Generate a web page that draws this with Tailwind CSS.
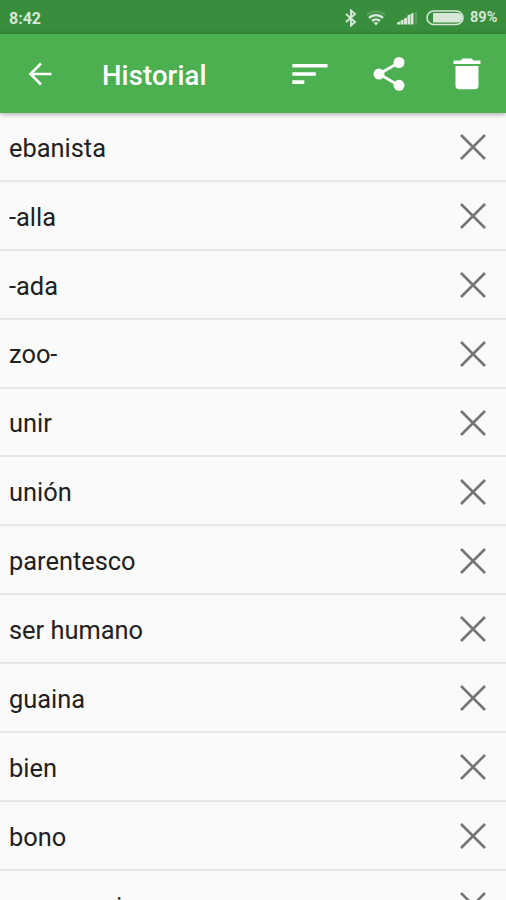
<!DOCTYPE html>
<html lang="es">
<head>
<meta charset="utf-8">
<title>Historial</title>
<script src="https://cdn.jsdelivr.net/npm/@tailwindcss/browser@4"></script>
</head>
<body class="h-[900px] overflow-hidden bg-[#fafafa] font-[Roboto,sans-serif] flex flex-col">
<div class="h-[34px] shrink-0 bg-[#388e3c] flex items-center justify-between pl-[9px] pr-[8px] text-[#d7e8d8]">
  <span class="text-[16px] font-bold leading-none pt-[3px]">8:42</span>
  <div class="flex items-center">
    <svg class="w-[12px] h-[18px] mt-[1px]" viewBox="0 0 12 18" fill="none" stroke="currentColor" stroke-width="1.9"><path d="M1 5l9 8-4 3.500V1.500L10 5 1 13"/></svg>
    <svg class="w-[20px] h-[16px] ml-[9px] mt-[2px]" viewBox="0 0 20 16" fill="none" stroke="currentColor"><path stroke-width="1.800" opacity=".25" d="M1 5a13 13 0 0 1 18 0"/><path stroke-width="2.400" d="M3 8a10 10 0 0 1 14 0M6 11a6 6 0 0 1 8 0"/><path fill="currentColor" stroke="none" d="M7.800 13a3.200 3.200 0 0 1 4.400 0L10 15.500z"/></svg>
    <svg class="w-[21px] h-[14px] ml-[11px] mt-[2px]" viewBox="0 0 21 14" fill="currentColor"><path d="M0 13.500v-2l3-1v3zM3.500 13.500v-4l3-1v5zM7 13.500V7.500l3-1v7zM10.500 13.500v-9l3-1.500v10.500zM14 13.500V3l2.500-1.500v12z"/><path opacity=".2" d="M18 13.500V1l2-1v13.500z"/></svg>
    <svg class="w-[38px] h-[16px] ml-[8px] mt-[2px]" viewBox="0 0 38 16"><rect x="1" y="1" width="36" height="13.500" rx="6.750" fill="none" stroke="currentColor" stroke-width="1.600"/><path fill="currentColor" d="M7 3h24.500a4.800 4.800 0 0 1 0 9.600H7z"/></svg>
    <span class="text-[14.500px] font-bold leading-none pt-[3px] ml-[6px] w-[28px] whitespace-nowrap">89%</span>
  </div>
</div>
<header class="relative h-[79px] shrink-0 bg-[#4caf50] shadow-[0_1px_5px_rgba(0,0,0,0.35)] flex items-center text-white">
  <svg class="w-[24px] h-[24px] ml-[28px]" viewBox="0 0 24 24" fill="none" stroke="currentColor" stroke-width="2.600"><path d="M23.500 12H3M13 1.500L2.500 12 13 22.500"/></svg>
  <h1 class="text-[27.500px] font-medium leading-none ml-[50px] w-[190px] pt-[4px] tracking-[0.1px]">Historial</h1>
  <svg class="w-[36px] h-[22px]" viewBox="0 0 36 22" fill="currentColor"><path d="M.3 1h35.200v3.600H.3zM.3 9.200h23.500v3.600H.3zM.3 17.300h12v3.600H.3z"/></svg>
  <svg class="w-[34px] h-[36px] ml-[44px]" viewBox="0 0 34 36" fill="currentColor"><path fill="none" stroke="currentColor" stroke-width="2.800" d="M27 6.500L7 18l20 11.500"/><circle cx="7" cy="18" r="5.500"/><circle cx="27" cy="6.500" r="5.500"/><circle cx="27" cy="29.300" r="5.500"/></svg>
  <svg class="w-[28px] h-[32px] ml-[47px]" viewBox="0 0 28 32" fill="currentColor"><path d="M.5 2.500h7L9.500.5h9l2 2h7V6H.5zM2.500 8h23v19.500a3.800 3.800 0 0 1-3.800 3.800H6.300a3.800 3.800 0 0 1-3.800-3.800z"/></svg>
</header>
<ul id="list"></ul>
<template id="row">
  <li class="group h-[68.9px] border-b-2 border-[#e6e6e6] flex items-center justify-between pl-[9px] pr-[20px]">
    <span class="text-[25.400px] leading-none text-[#212121] pt-[4px] group-last:tracking-[-0.5px] group-last:pt-[6px]"></span>
    <svg class="w-[26px] h-[26px] mt-[1.500px]" viewBox="0 0 26 26" fill="none" stroke="#757575" stroke-width="2.600"><path d="M1 1l24 24M25 1L1 25"/></svg>
  </li>
</template>
<script>
const words = ['ebanista','-alla','-ada','zoo-','unir','unión','parentesco','ser humano','guaina','bien','bono','consanguineo'];
for (const w of words) {
  const n = document.getElementById('row').content.cloneNode(true);
  n.querySelector('span').textContent = w;
  document.getElementById('list').append(n);
}
</script>
</body>
</html>
